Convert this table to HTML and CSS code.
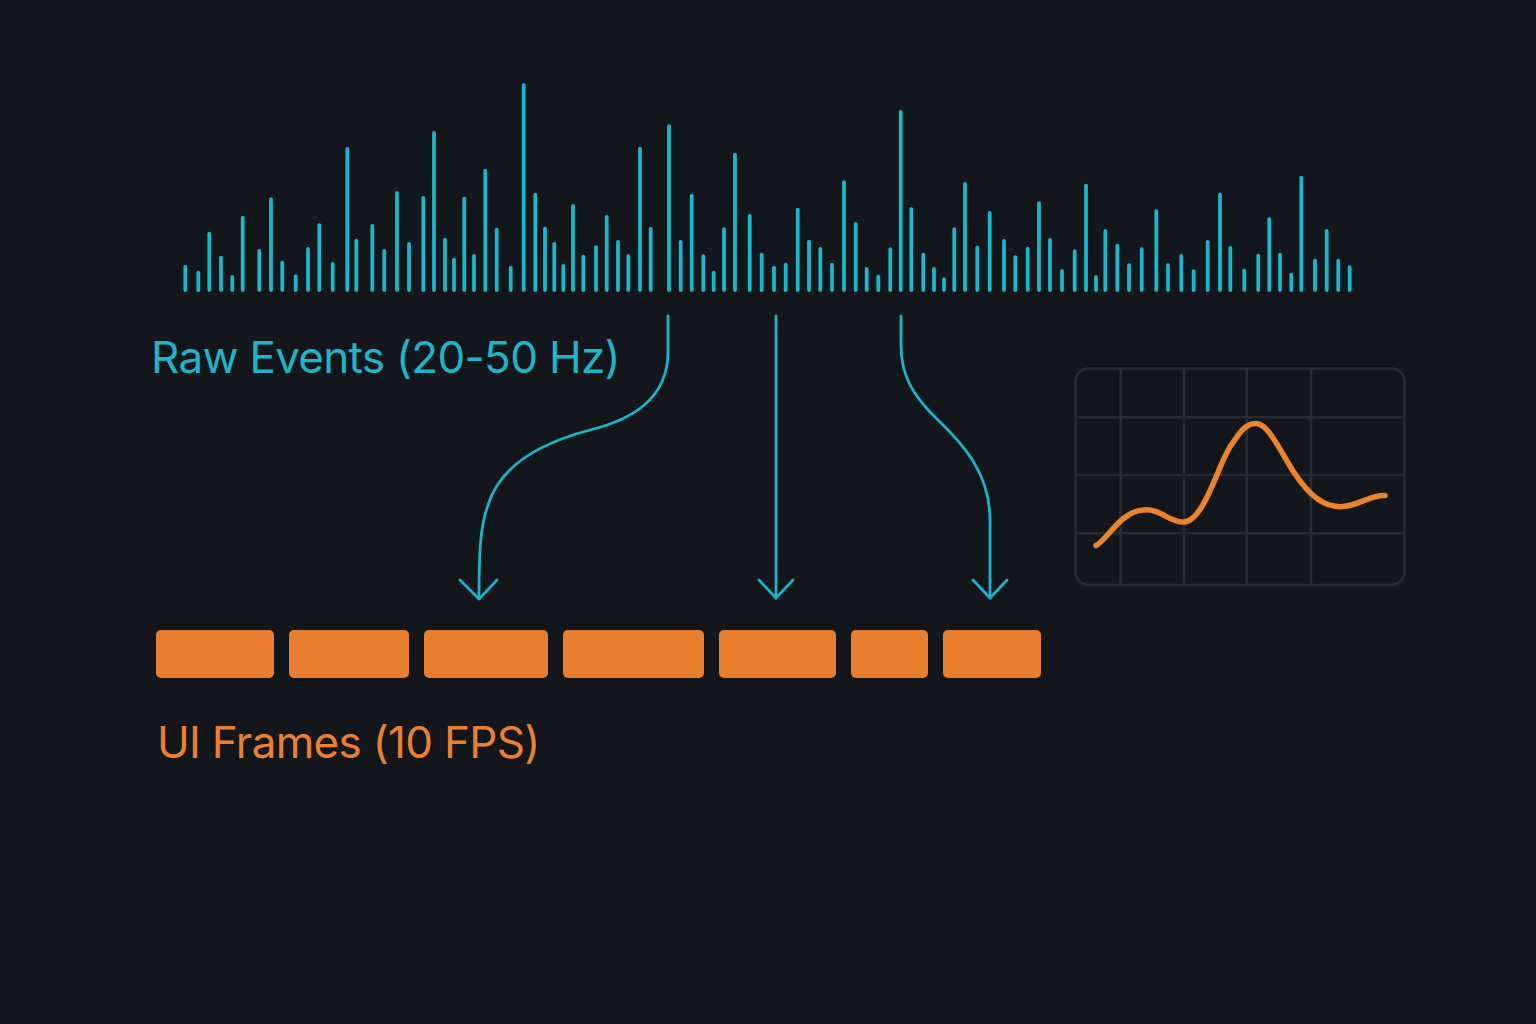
FILE: index.html
```html
<!DOCTYPE html>
<html lang="en">
<head>
<meta charset="utf-8">
<title>Raw Events vs UI Frames</title>
<link rel="stylesheet" href="styles.css">
</head>
<body>
<main class="stage">
  <svg class="diagram" width="1536" height="1024" viewBox="0 0 1536 1024" xmlns="http://www.w3.org/2000/svg" aria-hidden="true">
    <g class="bars" id="bars"></g>
    <g class="arrows">
      <path d="M668,316 V352 C668,400 630,420 590,430 C540,443 500,466 488,505 C481,525 479,545 479,598"/>
      <path d="M460,580 L479,599 L497,580"/>
      <path d="M776,316 V598"/>
      <path d="M759,580 L776,598 L793,580"/>
      <path d="M901,316 V345 C901,375 912,395 938,420 C965,446 990,475 990,520 V598"/>
      <path d="M973,580 L990,598 L1007,580"/>
    </g>
    <g class="chart">
      <rect class="frame" x="1075.5" y="368.5" width="329" height="216.5" rx="13"/>
      <path class="grid" d="M1120.7,369 V584 M1184,369 V584 M1246.7,369 V584 M1311,369 V584 M1076,417.3 H1404 M1076,475 H1404 M1076,533.3 H1404"/>
      <path class="curve" d="M1096,545.5 C1108,539 1120,512 1143,510 C1160,508 1170,523 1184,522 C1205,521 1220,458 1232,444 C1240,432 1246,423 1256.5,423.5 C1268,424 1280,450 1293,471 C1310,497 1325,508 1343,506.5 C1360,505 1370,495 1385,495.5"/>
    </g>
  </svg>

  <div class="content">
    <h2 class="label label-raw">Raw Events (20-50 Hz)</h2>
    <div class="frames">
      <div class="frame-block" style="width:118px"></div>
      <div class="frame-block" style="width:120px"></div>
      <div class="frame-block" style="width:124px"></div>
      <div class="frame-block" style="width:141px"></div>
      <div class="frame-block" style="width:117px"></div>
      <div class="frame-block" style="width:77px"></div>
      <div class="frame-block" style="width:98px"></div>
    </div>
    <h2 class="label label-ui">UI Frames (10 FPS)</h2>
  </div>
</main>
<script src="script.js"></script>
</body>
</html>
```

FILE: styles.css
```css
html, body {
  margin: 0;
  padding: 0;
  background: #13171c;
}

.stage {
  position: relative;
  width: 1536px;
  height: 1024px;
  overflow: hidden;
  background: #13171c;
  font-family: Inter, "Noto Sans", "Liberation Sans", sans-serif;
}

.diagram {
  position: absolute;
  left: 0;
  top: 0;
}

.bars line {
  stroke: #1bb6ca;
  stroke-width: 3.8;
  stroke-linecap: round;
}

.arrows path {
  fill: none;
  stroke: #1bb3c7;
  stroke-width: 2.8;
  stroke-linecap: round;
  stroke-linejoin: round;
}

.chart .frame,
.chart .grid {
  fill: none;
  stroke: #272c32;
  stroke-width: 2.6;
}

.chart .curve {
  fill: none;
  stroke: #ec842b;
  stroke-width: 5.5;
  stroke-linecap: round;
  stroke-linejoin: round;
}

.content {
  position: relative;
  padding: 334.7px 0 0 156px;
}

.label {
  margin: 0;
  font-size: 44px;
  line-height: 44px;
  font-weight: 400;
  letter-spacing: -0.7px;
  white-space: nowrap;
}

.label-raw {
  color: #1fb4c8;
  margin-left: -5px;
}

.frames {
  display: flex;
  gap: 15px;
  margin-top: 251.3px;
}

.frame-block {
  height: 48px;
  background: #e97f2e;
  border-radius: 5px;
}

.label-ui {
  color: #ec8030;
  margin-top: 41.7px;
  margin-left: 1px;
}
```

FILE: script.js
```js
(function () {
  var bars = [
    [185.3,265],[198.3,270.7],[209.3,231.7],[221,255.7],[232.3,275],[242.7,215.7],
    [259.3,249],[271,197.3],[282.3,260.7],[295.7,274.3],[308,247],[319.3,223.3],
    [332.7,262],[347.3,147],[356.3,238.7],[372.3,224],[384.3,249],[397,191],
    [409,242],[423.3,196],[434,131],[445,237.7],[454,257.7],[464.3,196.7],
    [474,254],[485.3,168.7],[496.7,227.7],[510.7,265.7],[523.7,83.3],[535.3,192.7],
    [545,226.7],[554.3,242],[563.3,264],[573,204],[583.3,254.7],[596,245.3],
    [606.7,215],[618,240],[628.3,254.3],[640,146.7],[650.7,226.7],[669,124.3],
    [680.7,240],[691.7,193.7],[703.3,254.3],[713.7,270.7],[724,227.3],[735,152.7],
    [749.7,214],[761.7,252.7],[774,265.7],[785.7,262.7],[797.7,207.7],[809,239.7],
    [820.3,247],[832,262.7],[844,180.3],[855.7,222],[866.7,267],[878.3,274.7],
    [890.3,247.3],[900.7,110],[911.3,207.3],[923.3,252.7],[934,267],[944,277.3],
    [954.3,227.3],[965,182],[977.3,245.7],[989.7,211],[1004,239],[1015.3,255.3],
    [1027.7,246.7],[1039,201.3],[1050,238],[1062,269],[1074.7,249.3],[1086,183.7],
    [1096,275],[1105.3,229],[1117.3,243.7],[1129,263.3],[1141.7,247.3],[1156.3,209.3],
    [1168,263.3],[1181.3,254],[1193.7,269.3],[1207.7,240],[1220,192.7],[1230.3,246],
    [1244.3,268.7],[1258.3,253.7],[1269.3,217.3],[1280,252.7],[1291.3,272.7],[1301.3,175.7],
    [1315,258.7],[1326.7,229],[1338.3,258.7],[1349.7,265.3]
  ];
  var ns = "http://www.w3.org/2000/svg";
  var g = document.getElementById("bars");
  bars.forEach(function (b) {
    var l = document.createElementNS(ns, "line");
    l.setAttribute("x1", b[0]);
    l.setAttribute("x2", b[0]);
    l.setAttribute("y1", b[1] + 1.9);
    l.setAttribute("y2", 290.1);
    g.appendChild(l);
  });
})();
```
